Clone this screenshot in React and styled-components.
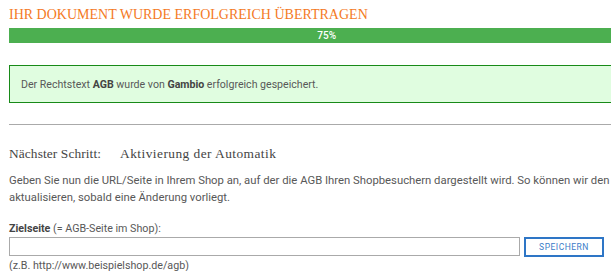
import React from "react";
import styled, { createGlobalStyle } from "styled-components";

const Global = createGlobalStyle`
  html, body { margin: 0; padding: 0; overflow: hidden; background: #fff; }
  body { font-family: Roboto, "Open Sans", sans-serif; color: #585858; }
  * { box-sizing: border-box; }
`;

const Page = styled.div`
  width: 847px;
  margin-left: 9px;
  padding-top: 7px;
`;

const Title = styled.h1`
  margin: 0;
  font-family: "Liberation Serif", "DejaVu Serif", serif;
  font-weight: normal;
  font-size: 14px;
  line-height: 16px;
  color: #f47a1f;
`;

const Track = styled.div`
  margin-top: 5px;
  height: 15px;
  background: #e6e6e6;
`;

const Fill = styled.div`
  height: 100%;
  background: #4caf50;
  display: flex;
  align-items: center;
  justify-content: center;
`;

const FillLabel = styled.span`
  color: #fff;
  font-size: 10px;
  font-weight: 500;
  line-height: 15px;
`;

const Notice = styled.div`
  margin-top: 22px;
  border: 1px solid #188a18;
  background: #e0fde0;
  height: 38px;
  padding: 0 11px;
  display: flex;
  align-items: center;
  font-size: 10.6px;
  color: #585858;
  & b { font-weight: 700; color: #444; }
`;

const Rule = styled.hr`
  margin: 21px 0 0;
  border: 0;
  border-top: 1px solid #aaa;
  height: 0;
`;

const StepHeading = styled.h2`
  margin: 21px 0 0;
  font-family: "Liberation Serif", "DejaVu Serif", serif;
  font-weight: normal;
  font-size: 13.4px;
  line-height: 16px;
  color: #444;
  white-space: nowrap;
`;

const StepLabel = styled.span`
  display: inline-block;
  margin-right: 19px;
  letter-spacing: 0.1px;
`;

const StepTitle = styled.span`
  letter-spacing: 0.45px;
`;

const Paragraph = styled.p`
  margin: 10px 0 0;
  font-size: 11.3px;
  line-height: 17px;
  color: #585858;
  white-space: nowrap;
`;

const FieldLabel = styled.label`
  display: block;
  margin-top: 16px;
  font-size: 10.7px;
  line-height: 14px;
  color: #585858;
  & b { font-weight: 700; color: #444; }
`;

const FormRow = styled.div`
  display: flex;
  align-items: flex-start;
  gap: 4px;
  margin-top: 1px;
`;

const Input = styled.input`
  width: 511px;
  height: 19px;
  border: 1px solid #aaa;
  margin: 0;
  padding: 0 4px;
  outline: none;
  font-family: Roboto, sans-serif;
  font-size: 11px;
`;

const Button = styled.button`
  width: 80px;
  height: 20px;
  border: 2px solid #2e76c6;
  background: #fff;
  color: #3a7cc8;
  font-family: Roboto, sans-serif;
  font-size: 8.5px;
  letter-spacing: 0.5px;
  padding: 0;
  cursor: pointer;
`;

const Hint = styled.div`
  margin-top: 2px;
  font-size: 10.7px;
  line-height: 14px;
  color: #585858;
`;

const progress = 75;

export default function App() {
  return (
    <>
      <Global />
      <Page>
        <Title>IHR DOKUMENT WURDE ERFOLGREICH ÜBERTRAGEN</Title>
        <Track>
          <Fill style={{ width: `${progress}%` }}>
            <FillLabel>{progress}%</FillLabel>
          </Fill>
        </Track>
        <Notice>
          <span>
            Der Rechtstext <b>AGB</b> wurde von <b>Gambio</b> erfolgreich gespeichert.
          </span>
        </Notice>
        <Rule />
        <StepHeading>
          <StepLabel>Nächster Schritt:</StepLabel>
          <StepTitle>Aktivierung der Automatik</StepTitle>
        </StepHeading>
        <Paragraph>
          Geben Sie nun die URL/Seite in Ihrem Shop an, auf der die AGB Ihren Shopbesuchern dargestellt wird. So können wir den Rechtstext automatisch
          <br />
          aktualisieren, sobald eine Änderung vorliegt.
        </Paragraph>
        <FieldLabel>
          <b>Zielseite</b> (= AGB-Seite im Shop):
        </FieldLabel>
        <FormRow>
          <Input type="text" />
          <Button>SPEICHERN</Button>
        </FormRow>
        <Hint>(z.B. http://www.beispielshop.de/agb)</Hint>
      </Page>
    </>
  );
}
